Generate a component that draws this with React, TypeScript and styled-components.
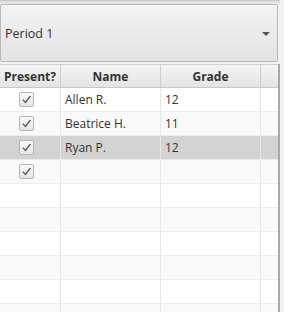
import { createGlobalStyle, styled } from "styled-components";

const GlobalStyle = createGlobalStyle`
  html, body {
    margin: 0;
    padding: 0;
    background: #f2f2f2;
  }
  body {
    font-family: "Segoe UI", "Open Sans", "Noto Sans", sans-serif;
    font-size: 12px;
    color: #333;
  }
`;

const Root = styled.div`
  width: 280px;
  height: 312px;
  display: flex;
  flex-direction: column;
  overflow: hidden;
  border-top: 1px solid #c8c8c8;
  box-sizing: border-box;
  background: linear-gradient(#dcdcdc, #ececec 4px, #f2f2f2 6px);
`;

const Combo = styled.div`
  flex-shrink: 0;
  margin-top: 3px;
  height: 58px;
  width: 278px;
  box-sizing: border-box;
  border: 1px solid #b8b8b8;
  border-radius: 2px;
  background: linear-gradient(#f3f3f3, #e3e3e3);
  display: flex;
  align-items: center;
  justify-content: space-between;
  padding: 1px 7px 0 4px;
  font-size: 12.5px;
  color: #333;
`;

const Arrow = styled.div`
  width: 0;
  height: 0;
  border-left: 4px solid transparent;
  border-right: 4px solid transparent;
  border-top: 4px solid #555;
`;

const Table = styled.div`
  margin-top: 2px;
  flex: 1;
  min-height: 0;
  width: 280px;
  box-sizing: border-box;
  border-right: 2px solid #a8a8a8;
  background: #fff;
  display: flex;
  flex-direction: column;
`;

const cols = "61px 100px 100px 1fr";

const Header = styled.div`
  flex-shrink: 0;
  display: grid;
  grid-template-columns: ${cols};
  height: 24px;
  background: linear-gradient(#f4f4f4, #e4e4e4);
  border-bottom: 1px solid #c8c8c8;
  border-top: 1px solid #d0d0d0;
  box-sizing: border-box;
`;

const HeadCell = styled.div`
  display: flex;
  align-items: center;
  justify-content: center;
  padding-top: 1px;
  font-weight: bold;
  font-size: 12px;
  color: #333;
  border-right: 1px solid #cfcfcf;
  &:last-child {
    border-right: none;
  }
`;

const Row = styled.div<{ $odd: boolean; $selected?: boolean }>`
  flex-shrink: 0;
  display: grid;
  grid-template-columns: ${cols};
  height: 24px;
  box-sizing: border-box;
  border-bottom: 1px solid #ececec;
  background: ${(p) => (p.$selected ? "#d3d3d3" : p.$odd ? "#f9f9f9" : "#fff")};
`;

const Cell = styled.div`
  display: flex;
  align-items: center;
  padding-left: 4px;
  border-right: 1px solid #e6e6e6;
  color: #333;
  &:last-child {
    border-right: none;
  }
`;

const CheckCell = styled(Cell)`
  justify-content: center;
  padding-left: 0;
  padding-right: 7px;
`;

const Box = styled.div`
  width: 15px;
  height: 15px;
  box-sizing: border-box;
  border: 1px solid #b5b5b5;
  border-radius: 2px;
  background: linear-gradient(#fafafa, #e6e6e6);
  display: flex;
  align-items: center;
  justify-content: center;
`;

const Check = () => (
  <Box>
    <svg width="11" height="11" viewBox="0 0 11 11">
      <path d="M1.8 5.6 L4.4 8.4 L9.4 2" fill="none" stroke="#555" strokeWidth="1.3" />
    </svg>
  </Box>
);

const students = [
  { name: "Allen R.", grade: "12" },
  { name: "Beatrice H.", grade: "11" },
  { name: "Ryan P.", grade: "12" },
];

export default function App() {
  const rows = Array.from({ length: 10 }, (_, i) => i);
  return (
    <>
      <GlobalStyle />
      <Root>
        <Combo>
          <span>Period 1</span>
          <Arrow />
        </Combo>
        <Table>
          <Header>
            <HeadCell>Present?</HeadCell>
            <HeadCell>Name</HeadCell>
            <HeadCell>Grade</HeadCell>
            <HeadCell />
          </Header>
          {rows.map((i) => {
            const s = students[i];
            return (
              <Row key={i} $odd={i % 2 === 1} $selected={i === 2}>
                <CheckCell>{i < 4 && <Check />}</CheckCell>
                <Cell>{s?.name}</Cell>
                <Cell>{s?.grade}</Cell>
                <Cell />
              </Row>
            );
          })}
        </Table>
      </Root>
    </>
  );
}
